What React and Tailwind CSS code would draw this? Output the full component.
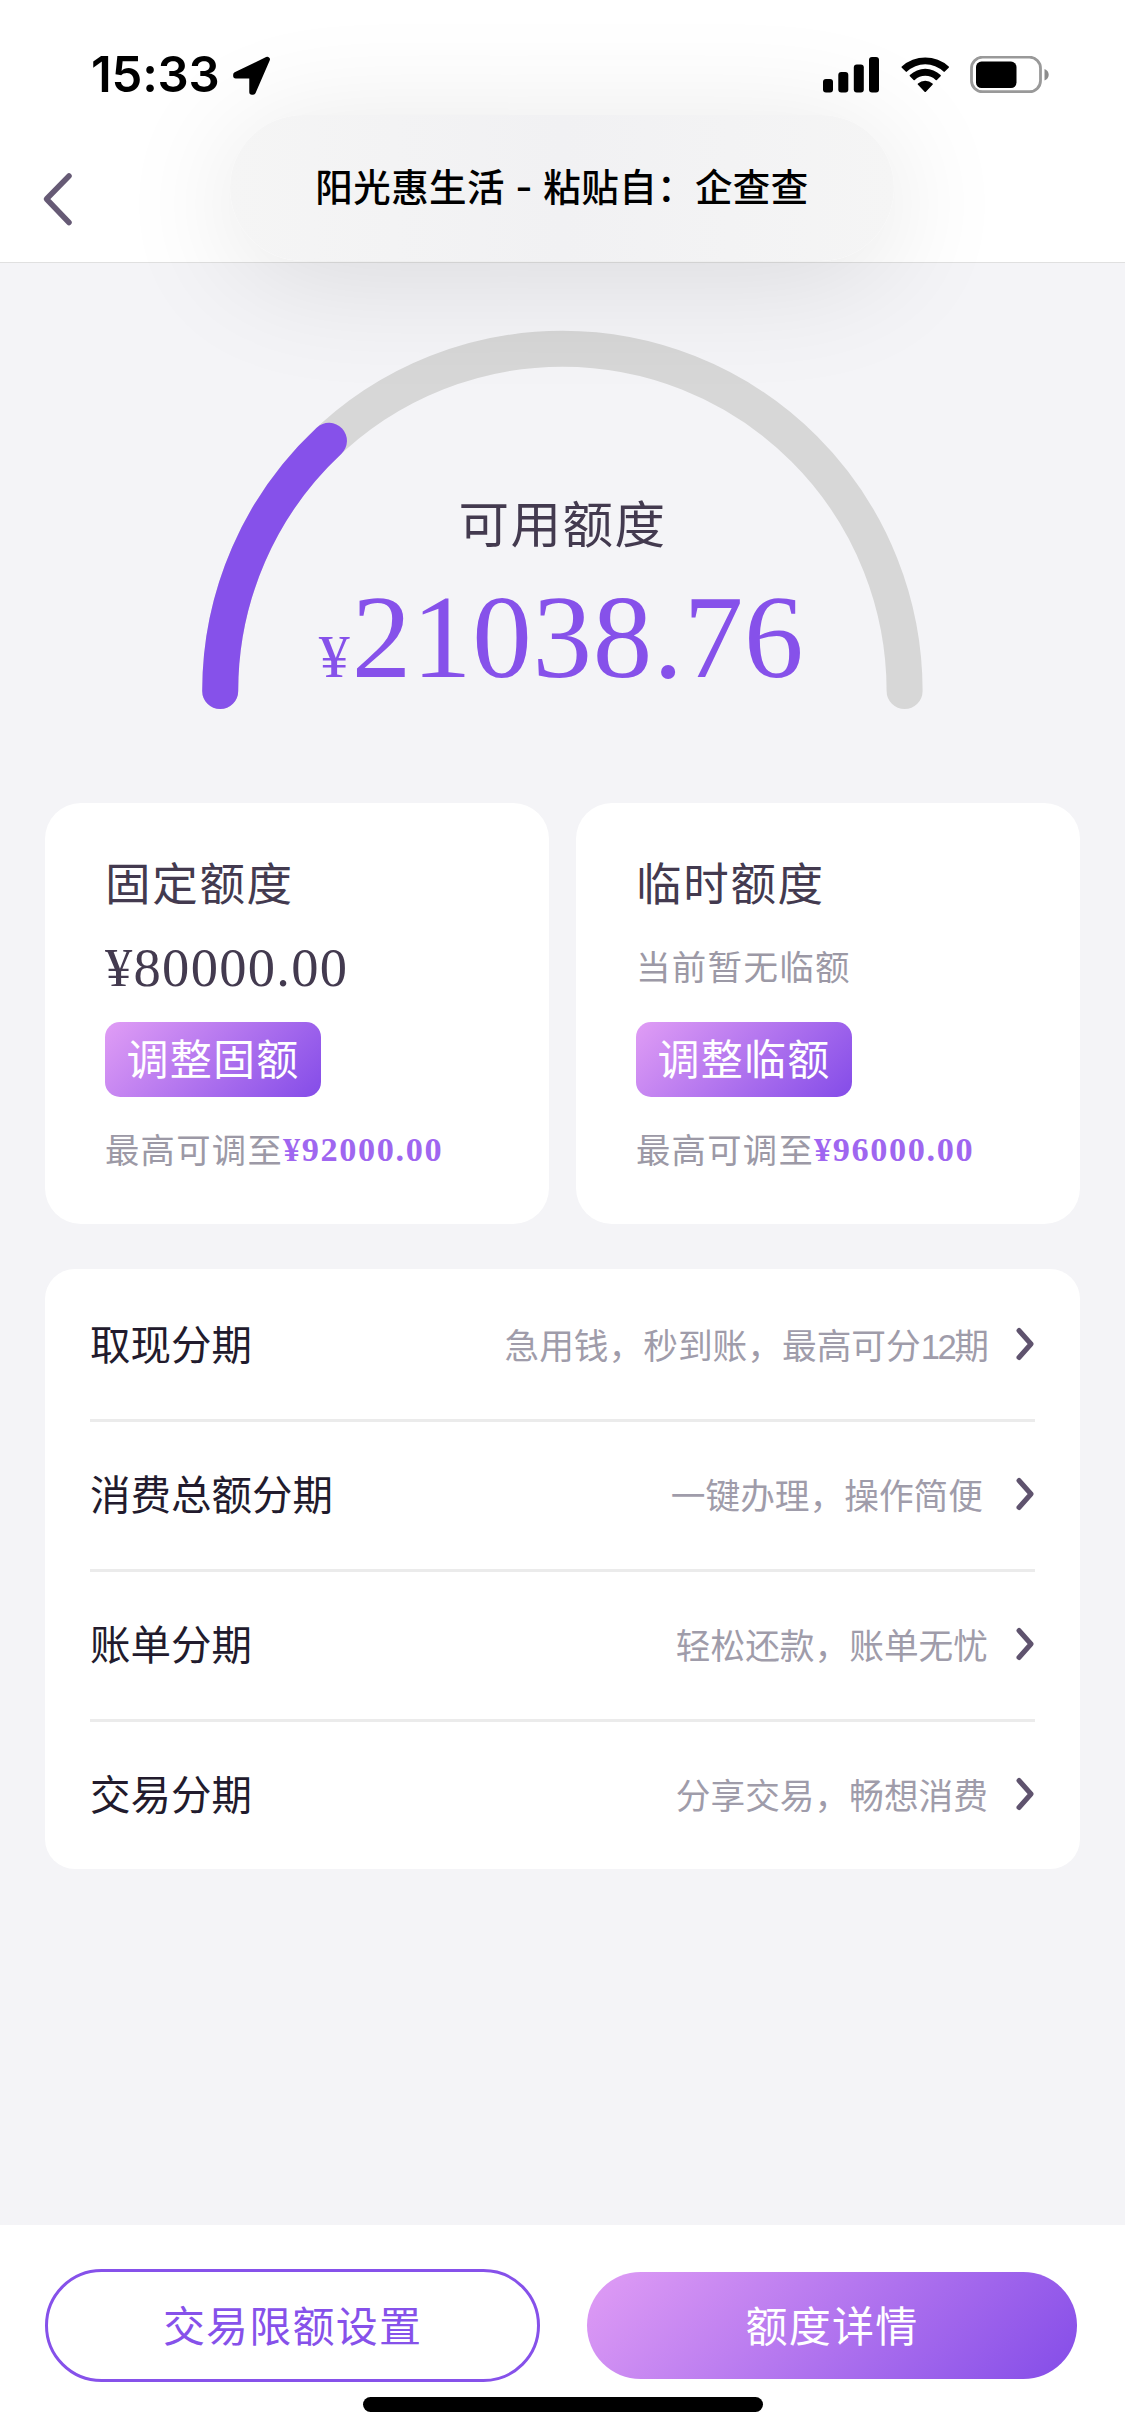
const installments = [
  {
    name: '取现分期',
    desc: (
      <>
        急用钱，秒到账，最高可分<span className="tracking-[-2.500px]">12</span>期
      </>
    ),
    pad: 'pr-[27px]'
  },
  { name: '消费总额分期', desc: '一键办理，操作简便', pad: 'pr-[33px]' },
  { name: '账单分期', desc: '轻松还款，账单无忧', pad: 'pr-[28px]' },
  { name: '交易分期', desc: '分享交易，畅想消费', pad: 'pr-[28px]' }
];

function StatusBar() {
  return (
    <div className="flex h-[150px] items-start justify-between pl-[91px] pr-[75px] pt-[56px]">
      <div className="flex items-start">
        <span className="font-['Inter'] text-[49px] font-semibold leading-[38px] tracking-[-0.2px] text-black">15:33</span>
        <svg width="40" height="40" viewBox="0 0 38 38" className="ml-[12px]">
          <path d="M33.5 3.2 3.6 17.7v1.1h15.3v15.4h1.2Z" fill="#000" stroke="#000" strokeWidth="5" strokeLinejoin="round" />
        </svg>
      </div>

      <div className="flex items-start">
        <svg width="57" height="36" viewBox="0 0 57 36" className="mt-px">
          <rect x="0" y="22" width="10" height="13.5" rx="3" />
          <rect x="15.3" y="15" width="10" height="20.5" rx="3" />
          <rect x="30.8" y="7.5" width="10" height="28" rx="3" />
          <rect x="46" y="0" width="10" height="35.5" rx="3" />
        </svg>
        <svg width="49" height="36" viewBox="0 0 49 36" className="ml-[21px]">
          <path d="M0.8 10.4a35 35 0 0 1 46.900 0 .9.9 0 0 1 0 1.300l-3.900 3.900a.9.9 0 0 1-1.300 0 26.500 26.500 0 0 0-36.500 0 .9.9 0 0 1-1.300 0L.8 11.700a.9.9 0 0 1 0-1.300Z" />
          <path d="M8.900 18.900a22.500 22.500 0 0 1 30.700 0 .9.9 0 0 1 0 1.300l-3.700 3.700a.9.9 0 0 1-1.200 0 15.500 15.500 0 0 0-20.900 0 .9.9 0 0 1-1.200 0l-3.700-3.700a.9.9 0 0 1 0-1.300Z" />
          <path d="M17 27.500a10.800 10.800 0 0 1 14.500 0 .9.9 0 0 1 0 1.300l-6.600 6.900a.9.9 0 0 1-1.300 0L17 28.800a.9.9 0 0 1 0-1.300Z" />
        </svg>
        <svg width="80" height="38" viewBox="0 0 80 38" className="ml-[20px]">
          <rect x="1.5" y="1.2" width="69" height="34.5" rx="11" fill="none" stroke="#999" strokeWidth="2.8" />
          <rect x="6" y="5.6" width="40.5" height="26.4" rx="5.5" />
          <path d="M74.5 13c2.800 1.200 4.200 3.200 4.200 5.800s-1.400 4.600-4.200 5.800Z" fill="#8c8c8c" />
        </svg>
      </div>
    </div>
  );
}

function PasteToast() {
  return (
    <div className="absolute left-[230px] top-[115px] z-10 flex h-[146px] w-[664px] items-center justify-center rounded-full bg-linear-to-r from-[#f5f5f5] via-[#f1f1f3] to-[#f5f5f5] shadow-[0_16px_125px_rgba(0,0,0,0.11)]">
      <span className="whitespace-pre text-[37.500px] font-medium tracking-[0.4px] text-black font-['Inter','Noto_Sans_CJK_SC',sans-serif]">阳光惠生活 - 粘贴自：企查查</span>
    </div>
  );
}

function Gauge({ percent }) {
  return (
    <div className="relative h-[540px]">
      <svg width="1125" height="540" viewBox="0 263 1125 540" fill="none" strokeWidth="36" strokeLinecap="round">
        <path d="M220.200 691a342.200 342.200 0 0 1 684.400 0" stroke="#d7d7d7" />
        <path
          d="M220.200 691a342.200 342.200 0 0 1 684.400 0"
          stroke="#8651ea"
          pathLength="100"
          strokeDasharray={`${percent} 200`}
        />
      </svg>
      <div className="absolute inset-x-0 top-[221px] flex flex-col items-center">
        <p className="text-[50.500px] leading-[74px] tracking-[1.5px] text-[#433a4f]">可用额度</p>
        <p className="mt-[19px] pr-[2px] font-['Liberation_Serif',serif] text-[119px] leading-[120px] tracking-[0.800px] text-[#8651ea]">
          <span className="text-[62px] tracking-[2px]">¥</span>21038.76
        </p>
      </div>
    </div>
  );
}

function LimitCard({ title, action, max, children }) {
  return (
    <div className="flex h-[421px] flex-1 flex-col items-start rounded-[36px] bg-white pl-[60px] pt-[45px] tracking-[1.3px]">
      <h2 className="text-[45.500px] leading-[66px] tracking-[1.700px] text-[#433a4f]">{title}</h2>
      <div className="mt-[20px] flex h-[66px] items-center">{children}</div>
      <button
        type="button"
        className="mt-[22px] h-[75px] w-[216px] rounded-[15px] bg-linear-[135deg] from-[#e09df5] to-[#844ce8] pb-[5px] text-[42px] leading-[70px] text-white"
      >
        {action}
      </button>
      <p className="mt-[25px] flex items-center text-[34.300px] leading-[51px] text-[#9c99a6]">
        最高可调至
        <span className="pt-[2px] font-['Liberation_Serif',serif] font-bold tracking-[1.600px] text-[#9f66f0]">{max}</span>
      </p>
    </div>
  );
}

function InstallmentRow({ name, desc, pad, first }) {
  return (
    <div className={`flex h-[150px] items-center ${first ? '' : 'border-t-[3px] border-[#ebebeb] pb-[3px]'}`}>
      <span className="pb-px text-[40.500px] text-[#221b2d]">{name}</span>
      <span className={`ml-auto pt-[7px] text-[34.700px] text-[#9f9caa] font-['Liberation_Sans','Noto_Sans_CJK_SC',sans-serif] ${pad}`}>{desc}</span>
      <svg width="18" height="34" viewBox="0 0 18 34" fill="none" className="mr-px">
        <path d="M3 3.500 15 17 3 30.500" stroke="#5f536e" strokeWidth="5" strokeLinecap="round" strokeLinejoin="round" />
      </svg>
    </div>
  );
}

export default function App() {
  return (
    <div className="relative flex h-[2435px] w-[1125px] flex-col overflow-hidden bg-[#f4f4f7] font-['Noto_Sans_CJK_SC',sans-serif]">
      <header className="h-[263px] border-b border-[#e0e0e0] bg-white">
        <StatusBar />
        <button type="button" aria-label="返回" className="ml-[40px] mt-[20px] block">
          <svg width="36" height="58" viewBox="0 0 36 58" fill="none">
            <path d="M29 6 6.500 29 29 52.500" stroke="#665a75" strokeWidth="5.500" strokeLinecap="round" strokeLinejoin="round" />
          </svg>
        </button>
      </header>
      <PasteToast />

      <main className="flex-1">
        <Gauge percent={26.1} />

        <section className="flex gap-[27px] px-[45px]">
          <LimitCard title="固定额度" action="调整固额" max="¥92000.00">
            <span className="pt-px font-['Liberation_Serif',serif] text-[54.500px] text-[#433a4f]">¥80000.00</span>
          </LimitCard>
          <LimitCard title="临时额度" action="调整临额" max="¥96000.00">
            <span className="pb-[2px] text-[34.500px] text-[#9c99a6]">当前暂无临额</span>
          </LimitCard>
        </section>

        <section className="mx-[45px] mt-[45px] rounded-[30px] bg-white px-[45px]">
          {installments.map((item, index) => (
            <InstallmentRow key={item.name} {...item} first={index === 0} />
          ))}
        </section>
      </main>

      <footer className="flex h-[210px] flex-col items-center bg-white pt-[44px]">
        <div className="flex w-full items-center gap-[47px] pl-[45px] pr-[48px]">
          <button type="button" className="h-[113px] w-[495px] rounded-full border-[3px] border-[#8651ea] pb-[4px] text-[42px] tracking-[1.2px] text-[#8651ea]">
            交易限额设置
          </button>
          <button type="button" className="h-[107px] flex-1 rounded-full bg-linear-[135deg] from-[#e09df5] to-[#844ce8] pb-[4px] text-[42px] tracking-[1.2px] text-white">
            额度详情
          </button>
        </div>
        <div className="mt-[15px] h-[15px] w-[400px] rounded-full bg-black" />
      </footer>
    </div>
  );
}
